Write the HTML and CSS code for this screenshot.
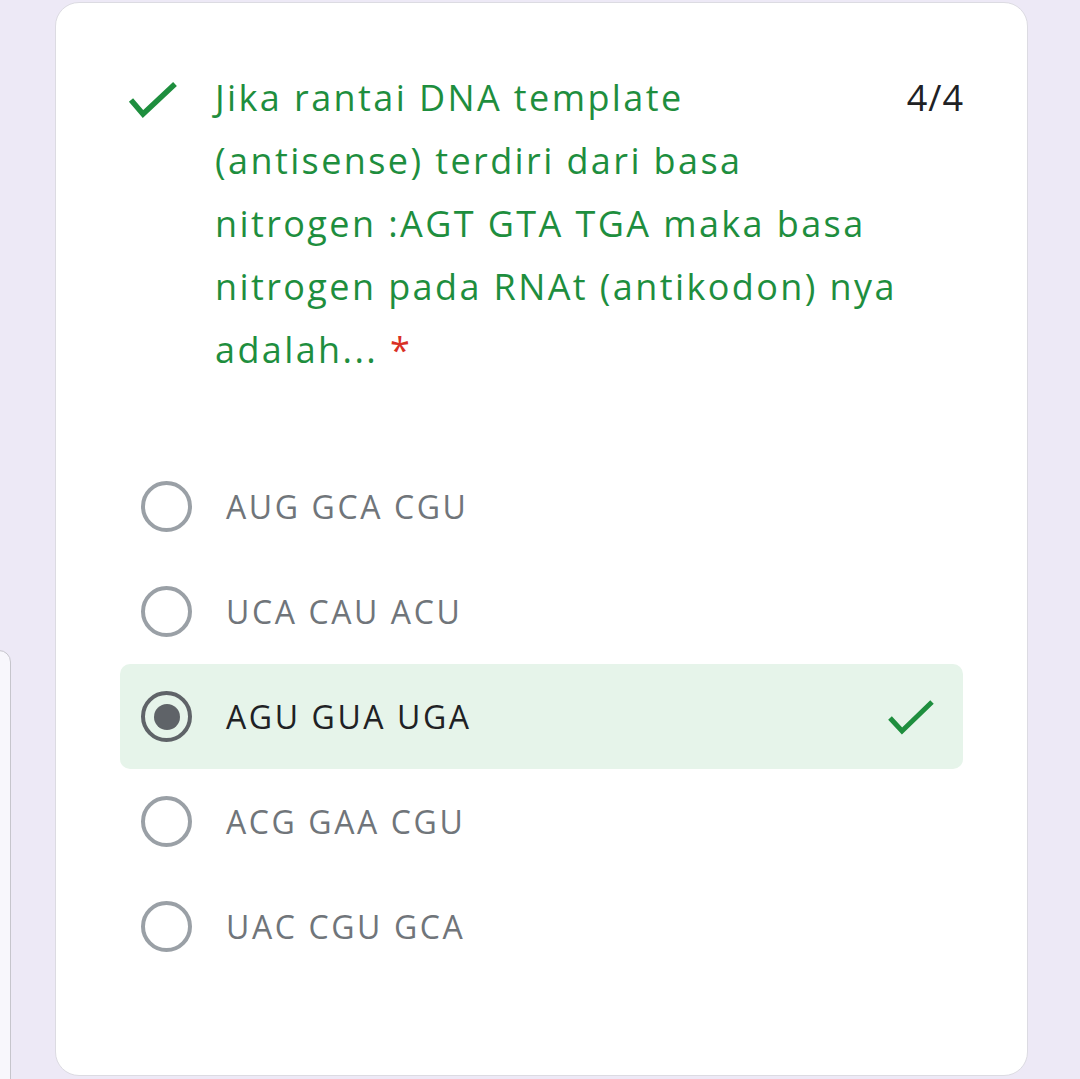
FILE: index.html
```html
<!DOCTYPE html>
<html lang="id">
<head>
<meta charset="utf-8">
<title>Quiz</title>
<link rel="stylesheet" href="styles.css">
</head>
<body>
<div class="peek"></div>
<main class="card">
  <div class="header">
    <svg class="qcheck" width="50" height="40" viewBox="0 0 50 40" aria-hidden="true">
      <polyline points="3,20 15,34 47,4" fill="none" stroke="#1e8e3e" stroke-width="5.5"/>
    </svg>
    <div class="question">Jika rantai DNA template<br>(antisense) terdiri dari basa<br>nitrogen :AGT GTA TGA maka basa<br>nitrogen pada RNAt (antikodon) nya<br>adalah... <span class="req">*</span></div>
    <div class="score">4/4</div>
  </div>
  <div class="options">
    <div class="option"><span class="radio"></span><span class="label">AUG GCA CGU</span></div>
    <div class="option"><span class="radio"></span><span class="label">UCA CAU ACU</span></div>
    <div class="option selected"><span class="radio"><span class="dot"></span></span><span class="label">AGU GUA UGA</span>
      <svg class="ocheck" width="48" height="40" viewBox="0 0 48 40" aria-hidden="true">
        <polyline points="3,19 15,32 45,3" fill="none" stroke="#1e8e3e" stroke-width="5"/>
      </svg>
    </div>
    <div class="option"><span class="radio"></span><span class="label">ACG GAA CGU</span></div>
    <div class="option"><span class="radio"></span><span class="label">UAC CGU GCA</span></div>
  </div>
</main>
</body>
</html>
```
FILE: styles.css
```css
html, body {
  margin: 0;
  padding: 0;
}
body {
  background: #ede9f6;
  height: 1079px;
  overflow: hidden;
  position: relative;
  font-family: "Open Sans", Roboto, "Liberation Sans", sans-serif;
}
.peek {
  position: absolute;
  left: -20px;
  top: 650px;
  width: 29px;
  height: 460px;
  background: #f8f7fc;
  border: 1px solid #c6c5cc;
  border-radius: 12px;
}
.card {
  box-sizing: border-box;
  margin: 2px 0 0 55px;
  width: 973px;
  height: 1074px;
  background: #fff;
  border: 1px solid #dcdbe2;
  border-radius: 24px;
  padding: 63px 64px 0 64px;
}
.header {
  display: flex;
  align-items: flex-start;
  padding-left: 8px;
}
.qcheck {
  flex: none;
  margin-top: 14px;
  margin-right: 37px;
}
.question {
  flex: 1;
  min-width: 0;
  color: #1e8e3e;
  font-size: 36px;
  line-height: 63px;
  letter-spacing: 2.4px;
  white-space: nowrap;
}
.req {
  color: #d93025;
}
.score {
  flex: none;
  color: #202124;
  font-size: 36px;
  line-height: 63px;
  letter-spacing: 1px;
  margin-right: -1px;
}
.options {
  margin-top: 73px;
  display: flex;
  flex-direction: column;
}
.option {
  height: 105px;
  display: flex;
  align-items: center;
  padding-left: 21px;
  padding-right: 28px;
  border-radius: 10px;
}
.option.selected {
  background: #e6f4ea;
}
.radio {
  box-sizing: border-box;
  flex: none;
  width: 51px;
  height: 51px;
  border: 4px solid #9aa0a6;
  border-radius: 50%;
  display: flex;
  align-items: center;
  justify-content: center;
  margin-right: 34px;
}
.selected .radio {
  border-color: #5f6368;
}
.dot {
  width: 26px;
  height: 26px;
  border-radius: 50%;
  background: #5f6368;
}
.label {
  flex: 1;
  font-size: 32px;
  letter-spacing: 2.6px;
  color: #70757a;
}
.selected .label {
  color: #202124;
}
.ocheck {
  flex: none;
  margin-top: 4px;
}
```
